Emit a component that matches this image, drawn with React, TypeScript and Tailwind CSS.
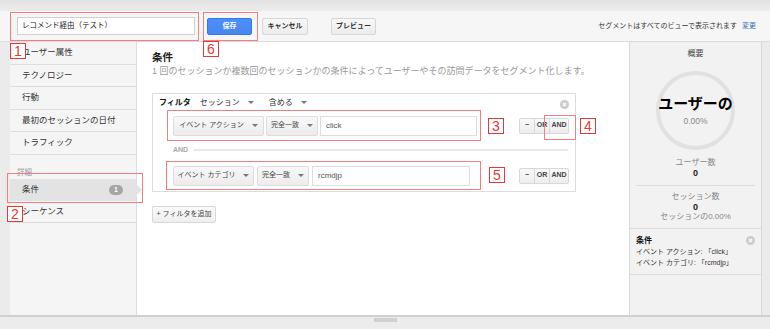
import React from 'react'

const font = { fontFamily: 'Arial, "Liberation Sans", "Noto Sans CJK JP", sans-serif' }

function Num({ n, className }: { n: string; className: string }) {
  return (
    <div
      className={`absolute flex h-[16px] w-[16px] items-center justify-center border border-[#e53935] bg-white text-[14px] leading-none text-[#e53935] ${className}`}
    >
      {n}
    </div>
  )
}

function Caret() {
  return <span className="ml-[8px] inline-block h-0 w-0 border-x-[3px] border-t-[3px] border-x-transparent border-t-[#777]" />
}

function GrayBtn({ label, w }: { label: string; w: string }) {
  return (
    <div
      className={`flex h-[20px] ${w} items-center justify-center rounded-[2px] border border-[#ddd] bg-gradient-to-b from-[#f8f8f8] to-[#ececec] text-[7px] text-[#444]`}
    >
      {label}
      <Caret />
    </div>
  )
}

function Logic() {
  return (
    <div className="flex h-[16px] rounded-[2px] border border-[#d8d8d8] bg-gradient-to-b from-[#fafafa] to-[#ededed] text-[7px] font-bold text-[#444]">
      <div className="flex w-[15px] items-center justify-center border-r border-[#d8d8d8]">−</div>
      <div className="flex w-[15px] items-center justify-center border-r border-[#d8d8d8]">OR</div>
      <div className="flex w-[18px] items-center justify-center">AND</div>
    </div>
  )
}

function XIcon({ className }: { className: string }) {
  return (
    <svg viewBox="0 0 10 10" className={`h-[9px] w-[9px] ${className}`}>
      <circle cx="5" cy="5" r="5" fill="#ccc" />
      <path d="M3.2 3.2 L6.8 6.8 M6.8 3.2 L3.2 6.8" stroke="#fff" strokeWidth="1.3" />
    </svg>
  )
}

const navTop = ['ユーザー属性', 'テクノロジー', '行動', '最初のセッションの日付', 'トラフィック']

export default function App() {
  return (
    <div
      className="relative flex h-[329px] w-[770px] flex-col overflow-hidden whitespace-nowrap bg-[#ebebeb] text-[#333]"
      style={font}
    >
      <div className="h-[11px] bg-gradient-to-b from-[#e2e2e2] to-[#ececec]" />

      {/* header */}
      <div className="flex h-[31px] items-center border-b border-[#dcdcdc] bg-[#f6f6f6] pl-[17px] pr-[14px]">
        <div className="flex h-[18px] w-[178px] items-center border border-[#cfcfcf] bg-white px-[4px] text-[7.5px] text-[#222]">
          レコメンド経由（テスト）
        </div>
        <div className="ml-[12px] flex h-[17px] w-[45px] items-center justify-center rounded-[2px] border border-[#3079ed] bg-gradient-to-b from-[#4d90fe] to-[#4787ed] text-[7px] font-bold text-white">
          保存
        </div>
        <div className="ml-[10px] flex h-[17px] w-[46px] items-center justify-center rounded-[2px] border border-[#d6d6d6] bg-gradient-to-b from-[#f8f8f8] to-[#ececec] text-[7px] font-bold text-[#333]">
          キャンセル
        </div>
        <div className="ml-[23px] flex h-[17px] w-[45px] items-center justify-center rounded-[2px] border border-[#d6d6d6] bg-gradient-to-b from-[#f8f8f8] to-[#ececec] text-[7px] font-bold text-[#333]">
          プレビュー
        </div>
        <div className="ml-auto text-[7px] text-[#333]">
          セグメントはすべてのビューで表示されます<span className="ml-[5px] text-[#3a6fb0]">変更</span>
        </div>
      </div>

      {/* body */}
      <div className="flex flex-1">
        {/* sidebar */}
        <div className="w-[137px] pl-[10px]">
          <div className="h-full border-r border-[#dcdcdc] bg-[#f5f5f5]">
            {navTop.map((t) => (
              <div key={t} className="flex h-[22.5px] items-center border-b border-[#dedede] pl-[12px] text-[8.5px] text-[#333]">
                {t}
              </div>
            ))}
            <div className="pl-[7px] pt-[12px] text-[7.5px] text-[#999]">詳細</div>
            <div className="relative mt-[1px] flex h-[22px] items-center bg-[#e3e3e3] pl-[12px] pr-[13px] text-[8.5px]">
              条件
              <span className="ml-auto flex h-[10px] w-[14px] items-center justify-center rounded-full bg-[#a5a5a5] text-[7px] font-bold text-white">
                1
              </span>
              <span className="absolute right-[-6px] top-[5px] h-0 w-0 border-y-[6px] border-l-[6px] border-y-transparent border-l-[#e3e3e3]" />
            </div>
            <div className="flex h-[22px] items-center border-b border-[#dedede] pl-[12px] text-[8.5px]">シーケンス</div>
          </div>
        </div>

        {/* main */}
        <div className="flex-1 bg-white pl-[15px] pt-[8px]">
          <div className="text-[10.5px] font-bold leading-[14px] text-[#222]">条件</div>
          <div className="mt-[1px] text-[9px] leading-[12px] text-[#999]">
            1 回のセッションか複数回のセッションかの条件によってユーザーやその訪問データをセグメント化します。
          </div>

          <div className="relative mt-[16px] w-[424px] border border-[#dcdcdc] pb-[1px]">
            <div className="flex h-[16px] items-center pl-[6px] pt-[1px] text-[8px] text-[#333]">
              <span className="font-bold text-[#111]">フィルタ</span>
              <span className="ml-[9px] flex items-center">
                セッション
                <Caret />
              </span>
              <span className="ml-[15px] flex items-center">
                含める
                <Caret />
              </span>
              <XIcon className="absolute right-[6px] top-[6px]" />
            </div>

            <div className="flex items-center pl-[14px] pr-[6px]">
              <div className="flex h-[31px] w-[314px] items-center gap-[2px] border border-[#f08080] pl-[5px] pr-[3px]">
                <GrayBtn label="イベント アクション" w="w-[91px]" />
                <GrayBtn label="完全一致" w="w-[52px]" />
                <div className="flex h-[20px] flex-1 items-center border border-[#ddd] pl-[5px] text-[8px] text-[#555]">click</div>
              </div>
              <div className="ml-auto">
                <Logic />
              </div>
            </div>

            <div className="ml-[20px] mr-[7px] mt-[4px] flex h-[10px] items-center gap-[6px] text-[7px] font-bold text-[#aaa]">
              AND
              <div className="h-[2px] flex-1 bg-[#e8e8e8]" />
            </div>

            <div className="mt-[6px] flex items-center pl-[13px] pr-[6px]">
              <div className="flex h-[29px] w-[315px] items-center gap-[3px] border border-[#f08080] pl-[6px] pr-[10px]">
                <GrayBtn label="イベント カテゴリ" w="w-[81px]" />
                <GrayBtn label="完全一致" w="w-[52px]" />
                <div className="flex h-[20px] flex-1 items-center border border-[#ddd] pl-[5px] text-[8px] text-[#555]">rcmdjp</div>
              </div>
              <div className="ml-auto">
                <Logic />
              </div>
            </div>
          </div>

          <div className="mt-[14px] flex h-[17px] w-[64px] items-center justify-center rounded-[2px] border border-[#d8d8d8] bg-gradient-to-b from-[#fafafa] to-[#efefef] text-[7px] text-[#444]">
            + フィルタを追加
          </div>
        </div>

        {/* right panel */}
        <div className="flex w-[133px] flex-col border-l border-r border-[#d8d8d8] bg-[#f2f2f2] text-center">
          <div className="pt-[7px] text-[8px] leading-[10px] text-[#444]">概要</div>
          <div className="mx-auto mt-[12px] flex h-[79px] w-[79px] flex-col items-center justify-center overflow-visible rounded-full border-[4px] border-[#e1e1e1]">
            <div className="mt-[2px] text-[15px] font-bold leading-none text-black">ユーザーの</div>
            <div className="mt-[4px] text-[8.5px] text-[#888]">0.00%</div>
          </div>
          <div className="mt-[8px] text-[8px] leading-[10px] text-[#888]">ユーザー数</div>
          <div className="text-[9px] font-bold leading-[10px] text-[#222]">0</div>
          <div className="mx-[6px] mt-[7px] border-t border-[#dcdcdc]" />
          <div className="mt-[6px] text-[8px] leading-[10px] text-[#888]">セッション数</div>
          <div className="text-[9px] font-bold leading-[10px] text-[#222]">0</div>
          <div className="text-[8px] leading-[9px] text-[#888]">セッションの0.00%</div>
          <div className="mt-[7px] border-t border-[#dcdcdc]" />
          <div className="relative px-[6px] pb-[6px] pt-[6px] text-left text-[7px] leading-[11px] text-[#333]">
            <div className="text-[8px] font-bold text-[#111]">条件</div>
            <div>イベント アクション: 「click」</div>
            <div>イベント カテゴリ: 「rcmdjp」</div>
            <XIcon className="absolute right-[6px] top-[7px]" />
          </div>
          <div className="border-t border-[#dcdcdc]" />
        </div>
        <div className="w-[8px]" />
      </div>

      {/* bottom bar */}
      <div className="flex h-[14px] justify-center border-t-[2px] border-[#d0d0d0] bg-[#ececec]">
        <div className="mt-[1px] h-[4px] w-[23px] bg-[#d0d0d0]" />
      </div>

      {/* annotations */}
      <div className="absolute left-[10px] top-[12px] h-[29px] w-[189px] border border-[#f08080]" />
      <div className="absolute left-[203px] top-[12px] h-[29px] w-[55px] border border-[#f08080]" />
      <div className="absolute left-[7px] top-[173px] h-[30px] w-[136px] border border-[#f08080]" />
      <div className="absolute left-[544px] top-[115px] h-[25px] w-[32px] border border-[#f08080]" />
      <Num n="1" className="left-[10px] top-[43px]" />
      <Num n="2" className="left-[7px] top-[206px]" />
      <Num n="6" className="left-[203px] top-[41px]" />
      <Num n="3" className="left-[488px] top-[118px]" />
      <Num n="4" className="left-[580px] top-[118px]" />
      <Num n="5" className="left-[489px] top-[167px]" />
    </div>
  )
}
